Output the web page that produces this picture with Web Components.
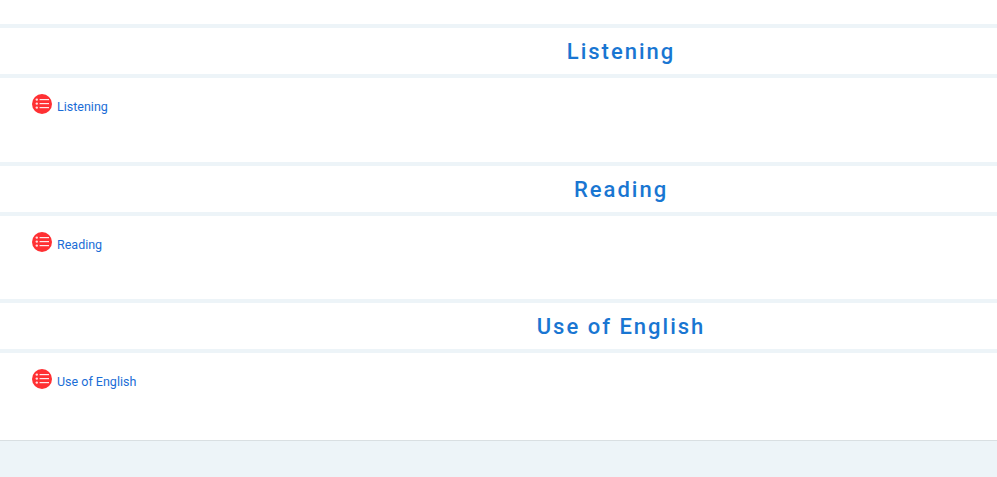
<!DOCTYPE html>
<html>
<head>
<meta charset="utf-8">
<title>Sections</title>
<style>
  html, body { margin: 0; padding: 0; background: #fff; }
  body { font-family: Roboto, "Liberation Sans", sans-serif; }
</style>
</head>
<body>
<template id="section-template">
  <style>
    :host { display: block; }
    h2 {
      margin: 0;
      height: 46px;
      line-height: 47px;
      padding-left: 245px;
      border-top: 4px solid #edf4f8;
      border-bottom: 4px solid #edf4f8;
      text-align: center;
      font-size: 22px;
      font-weight: 500;
      letter-spacing: 2px;
      color: #1976d2;
    }
    .body {
      height: var(--body-height, 84px);
      padding-left: 32px;
      padding-top: 16px;
      box-sizing: border-box;
    }
  </style>
  <h2></h2>
  <div class="body"><slot></slot></div>
</template>

<template id="item-template">
  <style>
    :host { display: flex; align-items: flex-start; }
    svg { width: 20px; height: 20px; flex: none; }
    a {
      margin-left: 5px;
      margin-top: 5px;
      font-size: 12.5px;
      line-height: 15px;
      color: #1a6dd6;
      text-decoration: none;
    }
  </style>
  <svg viewBox="0 0 20 20">
    <circle cx="10" cy="10" r="10" fill="#ff3033"/>
    <g fill="#fff">
      <circle cx="4.8" cy="5.6" r="1.2" opacity=".85"/>
      <circle cx="4.8" cy="9.6" r="1.2" opacity=".85"/>
      <circle cx="4.8" cy="13.6" r="1.2" opacity=".85"/>
      <rect x="7.6" y="5" width="9.4" height="1.2" opacity=".9"/>
      <rect x="7.6" y="9" width="9.4" height="1.2" opacity=".9"/>
      <rect x="7.6" y="13" width="9.4" height="1.2" opacity=".9"/>
    </g>
  </svg>
  <a href="#"><slot></slot></a>
</template>

<template id="footer-template">
  <style>
    :host {
      display: block;
      height: 36px;
      background: #edf4f8;
      border-top: 1px solid #d9dfe2;
    }
  </style>
</template>

<div style="height:24px"></div>
<course-section title="Listening"><course-item>Listening</course-item></course-section>
<course-section title="Reading" style="--body-height:83px"><course-item>Reading</course-item></course-section>
<course-section title="Use of English" style="--body-height:87px"><course-item>Use of English</course-item></course-section>
<page-footer></page-footer>

<script>
  class CourseSection extends HTMLElement {
    constructor() {
      super();
      this.attachShadow({mode: 'open'});
      const template = document.getElementById('section-template');
      this.shadowRoot.appendChild(template.content.cloneNode(true));
    }

    connectedCallback() {
      this.shadowRoot.querySelector('h2').textContent = this.getAttribute('title');
    }
  }

  class CourseItem extends HTMLElement {
    constructor() {
      super();
      this.attachShadow({mode: 'open'});
      const template = document.getElementById('item-template');
      this.shadowRoot.appendChild(template.content.cloneNode(true));
    }
  }

  class PageFooter extends HTMLElement {
    constructor() {
      super();
      this.attachShadow({mode: 'open'});
      const template = document.getElementById('footer-template');
      this.shadowRoot.appendChild(template.content.cloneNode(true));
    }
  }

  window.customElements.define('course-section', CourseSection);
  window.customElements.define('course-item', CourseItem);
  window.customElements.define('page-footer', PageFooter);
</script>
</body>
</html>
